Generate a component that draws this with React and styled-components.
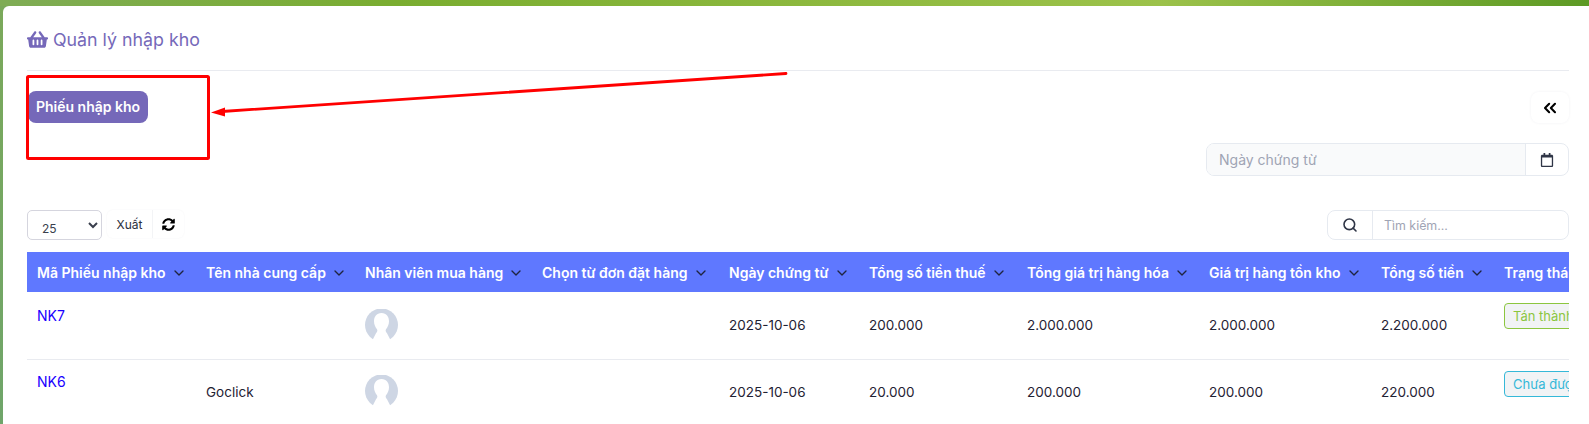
import React from 'react'
import styled, { createGlobalStyle } from 'styled-components'
import { FaShoppingBasket, FaSyncAlt, FaRegCalendar } from 'react-icons/fa'
import { ChevronDown, ChevronsLeft, Search } from 'lucide-react'

const GlobalStyle = createGlobalStyle`
	html, body {
		margin: 0;
		padding: 0;
		height: 100%;
		overflow: hidden;
	}
	body {
		font-family: Inter, "Liberation Sans", sans-serif;
		font-size: 14px;
		color: #1f2233;
		background: linear-gradient(180deg, #7ba95a 0%, #6fa56a 100%);
	}
`

const Page = styled.div`
	position: relative;
	height: 424px;
	padding: 6px 0 0 3px;
	box-sizing: border-box;
	background: linear-gradient(90deg, #7fac55 0%, #7aad30 25%, #9cc24a 73%, #5d9a25 100%) top / 100% 6px no-repeat;
`

const Card = styled.div`
	background: #fff;
	height: 418px;
	border-top-left-radius: 6px;
	padding: 0 20px 0 24px;
	box-sizing: border-box;
	overflow: hidden;
`

const Title = styled.h1`
	margin: 0;
	height: 65px;
	padding-top: 3px;
	display: flex;
	align-items: center;
	gap: 5px;
	font-size: 17.8px;
	font-weight: 400;
	color: #7568b9;
	border-bottom: 1px solid #e9ebf0;
	box-sizing: border-box;
`

const ActionRow = styled.div`
	display: flex;
	justify-content: space-between;
	align-items: flex-start;
	padding-top: 20px;
	height: 72px;
	box-sizing: border-box;
`

const PurpleButton = styled.button`
	margin-left: 1px;
	width: 120px;
	height: 32px;
	padding: 0 0 2px;
	border: none;
	border-radius: 8px;
	background: #7568b9;
	color: #fff;
	font: 600 14px Inter, sans-serif;
`

const CollapseButton = styled.button`
	width: 38px;
	height: 31px;
	margin-top: 1px;
	padding: 0;
	display: flex;
	align-items: center;
	justify-content: center;
	border: none;
	border-radius: 8px;
	background: #fff;
	color: #000;
	box-shadow: 0 0 3px rgba(30, 40, 80, 0.06);
`

const DateRow = styled.div`
	display: flex;
	justify-content: flex-end;
	height: 67px;
`

const InputGroup = styled.div`
	width: ${p => p.$width}px;
	height: ${p => p.$height}px;
	display: flex;
	border: 1px solid #e6eaf0;
	border-radius: 8px;
	box-sizing: border-box;
	overflow: hidden;
	background: #fff;
`

const DateInput = styled.div`
	flex: 1;
	display: flex;
	align-items: center;
	padding-left: 12px;
	background: #f9fafb;
	color: #9fa4b4;
	font-size: 14px;
`

const AddOn = styled.div`
	width: ${p => p.$width}px;
	display: flex;
	align-items: center;
	justify-content: center;
	color: #2f3546;
	border-${p => p.$side}: 1px solid #e6eaf0;
	box-sizing: border-box;
`

const SearchInput = styled.div`
	flex: 1;
	display: flex;
	align-items: center;
	padding-left: 11px;
	color: #9fa4b4;
	font-size: 12.4px;
`

const Toolbar = styled.div`
	display: flex;
	justify-content: space-between;
	align-items: flex-start;
	height: 42px;
`

const ToolLeft = styled.div`
	display: flex;
	gap: 5px;
`

const PageSize = styled.select`
	width: 75px;
	height: 30px;
	padding: 6px 0 0 10px;
	border: 1px solid #d5d5de;
	border-radius: 5px;
	background: #fff;
	color: #3a3f4d;
	font: 12px Inter, sans-serif;
`

const ToolGroup = styled.div`
	display: flex;
	height: 28px;
	border-radius: 6px;
	box-shadow: 0 0 2px rgba(30, 40, 80, 0.05);
`

const ToolButton = styled.div`
	width: ${p => p.$width}px;
	display: flex;
	align-items: center;
	justify-content: center;
	font-size: 12px;
	color: #2b2f3d;
	&:first-child {
		border-right: 1px solid #f3f4f6;
	}
`

const TableWrap = styled.div`
	overflow: hidden;
`

const Table = styled.table`
	width: 1607px;
	table-layout: fixed;
	border-collapse: collapse;
`

const HeadCell = styled.th`
	width: ${p => p.$width}px;
	height: 40px;
	padding: 0 0 0 10px;
	box-sizing: border-box;
	background: #5f78ff;
	color: #fff;
	font-size: 14px;
	font-weight: 600;
	text-align: left;
	white-space: nowrap;
	svg {
		margin-left: 5px;
		vertical-align: -3px;
		color: #1f2440;
	}
`

const Row = styled.tr`
	height: ${p => p.$height}px;
	border-bottom: ${p => (p.$last ? 'none' : '1px solid #e9ebf0')};
`

const Cell = styled.td`
	padding: 0 0 0 10px;
	font-size: 13.5px;
	white-space: nowrap;
	vertical-align: middle;
`

const CodeCell = styled(Cell)`
	vertical-align: top;
	padding-top: ${p => p.$top}px;
	font-size: 14px;
	line-height: 18px;
	color: #1a00ff;
`

const StatusCell = styled(Cell)`
	vertical-align: top;
	padding-top: 11px;
`

const Avatar = styled.svg`
	display: block;
	width: 33px;
	height: 33px;
`

const Badge = styled.span`
	display: inline-block;
	height: 26px;
	line-height: 24px;
	padding: 0 8px;
	box-sizing: border-box;
	border: 1px solid ${p => p.$color};
	border-radius: 4px;
	background: #f1f3f5;
	color: ${p => p.$color};
	font-size: 13px;
`

const Overlay = styled.svg`
	position: absolute;
	top: 0;
	left: 0;
	pointer-events: none;
`

const columns = [
	['Mã Phiếu nhập kho', 169],
	['Tên nhà cung cấp', 159],
	['Nhân viên mua hàng', 177],
	['Chọn từ đơn đặt hàng', 187],
	['Ngày chứng từ', 140],
	['Tổng số tiền thuế', 158],
	['Tổng giá trị hàng hóa', 182],
	['Giá trị hàng tồn kho', 172],
	['Tổng số tiền', 123],
	['Trạng thái', 140],
]

const rows = [
	{ code: 'NK7', codeTop: 15, supplier: '', date: '2025-10-06', tax: '200.000', goods: '2.000.000', stock: '2.000.000', total: '2.200.000', status: 'Tán thành', color: '#8cc63f', height: 67 },
	{ code: 'NK6', codeTop: 13, supplier: 'Goclick', date: '2025-10-06', tax: '20.000', goods: '200.000', stock: '200.000', total: '220.000', status: 'Chưa được duyệt', color: '#35b8d8', height: 65, last: true },
]

function UserAvatar() {
	return (
		<Avatar viewBox="0 0 33 33">
			<circle cx="16.5" cy="16" r="16.5" fill="#ced6e4" />
			<path d="M16.500 4c-5 0-7.500 3.800-7.500 8.300 0 3.500 1.500 6 3 8 .8 1.200.2 2.600-1 4L6.500 33h20l-4.500-8.700c-1.200-1.400-1.800-2.800-1-4 1.500-2 3-4.500 3-8C24 7.800 21.500 4 16.500 4z" fill="#fff" />
		</Avatar>
	)
}

export default function App() {
	return (
		<Page>
			<GlobalStyle />
			<Card>
				<Title>
					<FaShoppingBasket size={21} />
					Quản lý nhập kho
				</Title>
				<ActionRow>
					<PurpleButton>Phiếu nhập kho</PurpleButton>
					<CollapseButton><ChevronsLeft size={20} strokeWidth={2.5} /></CollapseButton>
				</ActionRow>
				<DateRow>
					<InputGroup $width={363} $height={33}>
						<DateInput>Ngày chứng từ</DateInput>
						<AddOn $width={43} $side="left"><FaRegCalendar size={14} /></AddOn>
					</InputGroup>
				</DateRow>
				<Toolbar>
					<ToolLeft>
						<PageSize defaultValue="25">
							<option>25</option>
						</PageSize>
						<ToolGroup>
							<ToolButton $width={45}>Xuất</ToolButton>
							<ToolButton $width={31}><FaSyncAlt size={13} color="#000" /></ToolButton>
						</ToolGroup>
					</ToolLeft>
					<InputGroup $width={242} $height={30}>
						<AddOn $width={45} $side="right"><Search size={16} strokeWidth={2.4} /></AddOn>
						<SearchInput>Tìm kiếm...</SearchInput>
					</InputGroup>
				</Toolbar>
				<TableWrap>
					<Table>
						<thead>
							<tr>
								{columns.map(([label, width]) => (
									<HeadCell key={label} $width={width}>{label}<ChevronDown size={16} /></HeadCell>
								))}
							</tr>
						</thead>
						<tbody>
							{rows.map(row => (
								<Row key={row.code} $height={row.height} $last={row.last}>
									<CodeCell $top={row.codeTop}>{row.code}</CodeCell>
									<Cell>{row.supplier}</Cell>
									<Cell><UserAvatar /></Cell>
									<Cell />
									<Cell>{row.date}</Cell>
									<Cell>{row.tax}</Cell>
									<Cell>{row.goods}</Cell>
									<Cell>{row.stock}</Cell>
									<Cell>{row.total}</Cell>
									<StatusCell><Badge $color={row.color}>{row.status}</Badge></StatusCell>
								</Row>
							))}
						</tbody>
					</Table>
				</TableWrap>
			</Card>
			<Overlay width="1589" height="424" viewBox="0 0 1589 424">
				<rect x="27.500" y="76.500" width="181" height="82" fill="none" stroke="#f00" strokeWidth="3" rx="1" />
				<line x1="786" y1="73.500" x2="222" y2="111.500" stroke="#f00" strokeWidth="2.800" strokeLinecap="round" />
				<path d="M211 112.500 L225 107.500 L225 116.500 Z" fill="#f00" />
			</Overlay>
		</Page>
	)
}
